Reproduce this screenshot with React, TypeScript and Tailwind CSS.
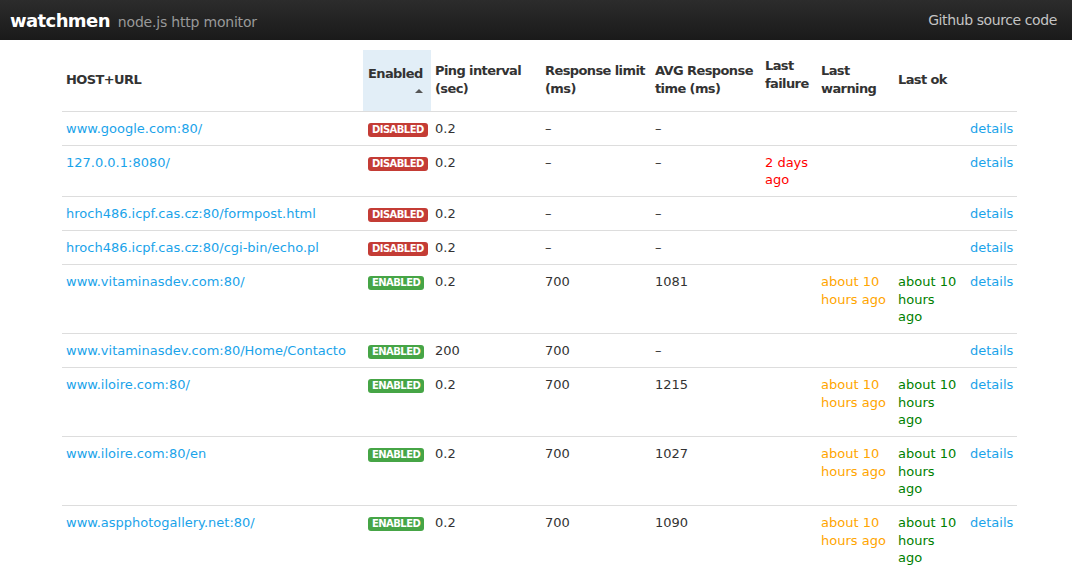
type Row = {
  url: string;
  enabled: boolean;
  ping: string;
  limit: string;
  avg: string;
  failure?: string;
  warning?: string;
  ok?: string;
};

const ROWS: Row[] = [
  { url: "www.google.com:80/", enabled: false, ping: "0.2", limit: "–", avg: "–" },
  { url: "127.0.0.1:8080/", enabled: false, ping: "0.2", limit: "–", avg: "–", failure: "2 days ago" },
  { url: "hroch486.icpf.cas.cz:80/formpost.html", enabled: false, ping: "0.2", limit: "–", avg: "–" },
  { url: "hroch486.icpf.cas.cz:80/cgi-bin/echo.pl", enabled: false, ping: "0.2", limit: "–", avg: "–" },
  { url: "www.vitaminasdev.com:80/", enabled: true, ping: "0.2", limit: "700", avg: "1081", warning: "about 10 hours ago", ok: "about 10 hours ago" },
  { url: "www.vitaminasdev.com:80/Home/Contacto", enabled: true, ping: "200", limit: "700", avg: "–" },
  { url: "www.iloire.com:80/", enabled: true, ping: "0.2", limit: "700", avg: "1215", warning: "about 10 hours ago", ok: "about 10 hours ago" },
  { url: "www.iloire.com:80/en", enabled: true, ping: "0.2", limit: "700", avg: "1027", warning: "about 10 hours ago", ok: "about 10 hours ago" },
  { url: "www.aspphotogallery.net:80/", enabled: true, ping: "0.2", limit: "700", avg: "1090", warning: "about 10 hours ago", ok: "about 10 hours ago" },
];

function Label({ on }: { on: boolean }) {
  return (
    <span
      className={
        "inline-block rounded-[3px] px-[4px] text-[10px] font-bold leading-[14px] text-white tracking-[-0.55px] " +
        (on ? "bg-[#46a546]" : "bg-[#c43c35]")
      }
    >
      {on ? "ENABLED" : "DISABLED"}
    </span>
  );
}

const cell = "px-[4px] pt-[8px] pb-[7.5px]";

export default function App() {
  return (
    <div className="min-h-[568px] bg-white font-['DejaVu_Sans',Verdana,sans-serif] text-[13px] text-[#333]">
      <div className="flex h-[40px] items-center justify-between bg-gradient-to-b from-[#2c2c2c] to-[#1a1a1a] px-[10px]">
        <div className="flex items-baseline gap-[8px]">
          <span className="text-[18px] font-bold tracking-[-0.6px] text-white">watchmen</span>
          <span className="text-[14px] tracking-[-0.2px] text-[#999]">node.js http monitor</span>
        </div>
        <span className="pr-[5px] text-[14px] tracking-[-0.4px] text-[#c4c4c4]">Github source code</span>
      </div>

      <table className="mx-[62px] mt-[10px] w-[955px] table-fixed border-collapse leading-[17.5px]">
        <colgroup>
          <col className="w-[301px]" />
          <col className="w-[68px]" />
          <col className="w-[110px]" />
          <col className="w-[110px]" />
          <col className="w-[110px]" />
          <col className="w-[56px]" />
          <col className="w-[77px]" />
          <col className="w-[72px]" />
          <col className="w-[51px]" />
        </colgroup>
        <thead>
          <tr className="h-[61px] border-b border-[#ddd] text-left align-middle font-bold leading-[18px] tracking-[-0.6px]">
            <th className="px-[4px]">HOST+URL</th>
            <th className="bg-[#e2eef7] px-[5px]">
              <div className="-mt-[2px]">Enabled</div>
              <div className="flex justify-end pr-[3px] pt-[6px]">
                <span className="h-0 w-0 border-x-[4px] border-b-[4px] border-x-transparent border-b-[#555]" />
              </div>
            </th>
            <th className="px-[4px]">Ping interval (sec)</th>
            <th className="px-[4px]">Response limit (ms)</th>
            <th className="px-[4px]">AVG Response time (ms)</th>
            <th className="px-[4px] pb-[10px]">Last failure</th>
            <th className="px-[4px]">Last warning</th>
            <th className="px-[4px]">Last ok</th>
            <th className="px-[4px]"></th>
          </tr>
        </thead>
        <tbody>
          {ROWS.map((r) => (
            <tr key={r.url} className="border-b border-[#ddd] align-top">
              <td className={cell + " text-[#1aa3ea]"}>{r.url}</td>
              <td className="px-[5px] pt-[8px] pb-[7.5px]">
                <Label on={r.enabled} />
              </td>
              <td className={cell}>{r.ping}</td>
              <td className={cell}>{r.limit}</td>
              <td className={cell}>{r.avg}</td>
              <td className={cell + " text-[#f00]"}>{r.failure}</td>
              <td className={cell + " text-[#ffa500]"}>{r.warning}</td>
              <td className={cell + " text-[#008000]"}>{r.ok}</td>
              <td className={cell + " text-[#1aa3ea]"}>details</td>
            </tr>
          ))}
        </tbody>
      </table>
    </div>
  );
}
